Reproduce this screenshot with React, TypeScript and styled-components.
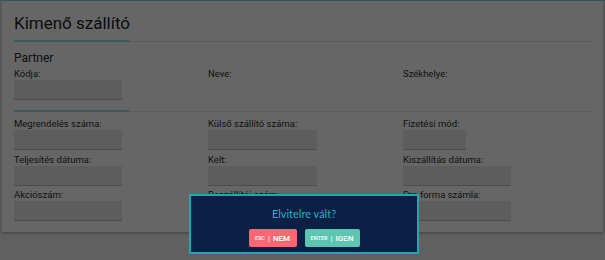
import React from "react";
import styled, { createGlobalStyle } from "styled-components";

// ====== Global ======
const GlobalStyle = createGlobalStyle`
  html, body {
    margin: 0;
    padding: 0;
    background: #efefef;
    font-family: Roboto, "Noto Sans", Arial, sans-serif;
  }
`;

// ====== Page ======
const Page = styled.div`
  width: 605px;
  height: 260px;
  border-top: 1px solid #7fd6de;
  box-sizing: border-box;
  overflow: hidden;
`;

const Card = styled.div`
  margin: 0 2px;
  padding: 9px 10px 11px 12px;
  background: #ffffff;
  box-shadow: 0 1px 3px rgba(0, 0, 0, 0.35);
`;

const Title = styled.h1`
  margin: 0;
  font-size: 17px;
  font-weight: 400;
  color: #222;
  line-height: 27px;
`;

const Divider = styled.div<{ $gap?: number }>`
  height: 2px;
  margin-top: ${({ $gap }) => $gap ?? 4}px;
  background: linear-gradient(#e3e3e3, #e3e3e3) bottom / 100% 1px no-repeat;

  &::before {
    content: "";
    display: block;
    width: 115px;
    height: 2px;
    background: #8fe2ea;
  }
`;

const Section = styled.h2`
  margin: 9px 0 0;
  font-size: 12px;
  font-weight: 400;
  color: #262626;
  line-height: 14px;
`;

const Grid = styled.div<{ $top?: number }>`
  display: grid;
  grid-template-columns: 194px 195px 1fr;
  row-gap: 0.5px;
  margin-top: ${({ $top }) => $top ?? 0}px;
`;

const Field = styled.div`
  display: flex;
  flex-direction: column;
`;

const Label = styled.label`
  height: 15px;
  display: flex;
  align-items: flex-end;
  padding-bottom: 1px;
  box-sizing: border-box;
  font-size: 9.5px;
  line-height: 11px;
  color: #2e2e2e;
`;

const Input = styled.div<{ $w?: number }>`
  width: ${({ $w }) => $w ?? 108}px;
  height: 19px;
  background: #e8e8e8;
  border-bottom: 1px solid #bdbdbd;
`;

// ====== Dialog ======
const Overlay = styled.div`
  position: fixed;
  inset: 0;
  background: rgba(0, 0, 0, 0.6);
`;

const Dialog = styled.div`
  position: fixed;
  top: 194px;
  left: 189px;
  width: 230px;
  height: 60px;
  box-sizing: border-box;
  background: #0c1f44;
  border: 2px solid #1aa9b5;
  display: flex;
  flex-direction: column;
  align-items: center;
  font-family: Lato, "Noto Sans", sans-serif;
`;

const DialogTitle = styled.div`
  margin-top: 11px;
  font-size: 11px;
  color: #1db3cc;
  line-height: 14px;
`;

const Actions = styled.div`
  display: flex;
  gap: 8px;
  margin-top: 8px;
`;

const Btn = styled.button<{ $color: string; $w: number }>`
  width: ${({ $w }) => $w}px;
  height: 18px;
  padding: 0;
  border: none;
  border-radius: 2px;
  background: ${({ $color }) => $color};
  color: #fff;
  font-family: Roboto, sans-serif;
  font-size: 8px;
  font-weight: 500;
  display: flex;
  align-items: center;
  justify-content: center;
  gap: 3px;
`;

const Key = styled.span`
  font-size: 5.5px;
`;

const fields1 = [
  { label: "Kódja:", w: 108 },
  { label: "Neve:", w: 0 },
  { label: "Székhelye:", w: 0 },
];

const fields2 = [
  { label: "Megrendelés száma:", w: 108 },
  { label: "Külső szállító száma:", w: 109 },
  { label: "Fizetési mód:", w: 63 },
  { label: "Teljesítés dátuma:", w: 108 },
  { label: "Kelt:", w: 109 },
  { label: "Kiszállítás dátuma:", w: 108 },
  { label: "Akciószám:", w: 108 },
  { label: "Beszállítói szám:", w: 109 },
  { label: "Pro forma számla:", w: 108 },
];

export default function App() {
  return (
    <>
      <GlobalStyle />
      <Page>
        <Card>
          <Title>Kimenő szállító</Title>
          <Divider $gap={3} />
          <Section>Partner</Section>
          <Grid $top={0}>
            {fields1.map((f) => (
              <Field key={f.label}>
                <Label>{f.label}</Label>
                {f.w > 0 && <Input $w={f.w} />}
              </Field>
            ))}
          </Grid>
          <Divider $gap={10} />
          <Grid $top={3}>
            {fields2.map((f) => (
              <Field key={f.label}>
                <Label>{f.label}</Label>
                <Input $w={f.w} />
              </Field>
            ))}
          </Grid>
        </Card>
      </Page>
      <Overlay />
      <Dialog>
        <DialogTitle>Elvitelre vált?</DialogTitle>
        <Actions>
          <Btn $color="#ff6673" $w={48}>
            <Key>ESC</Key>|<span>NEM</span>
          </Btn>
          <Btn $color="#5dc6b2" $w={55}>
            <Key>ENTER</Key>|<span>IGEN</span>
          </Btn>
        </Actions>
      </Dialog>
    </>
  );
}
